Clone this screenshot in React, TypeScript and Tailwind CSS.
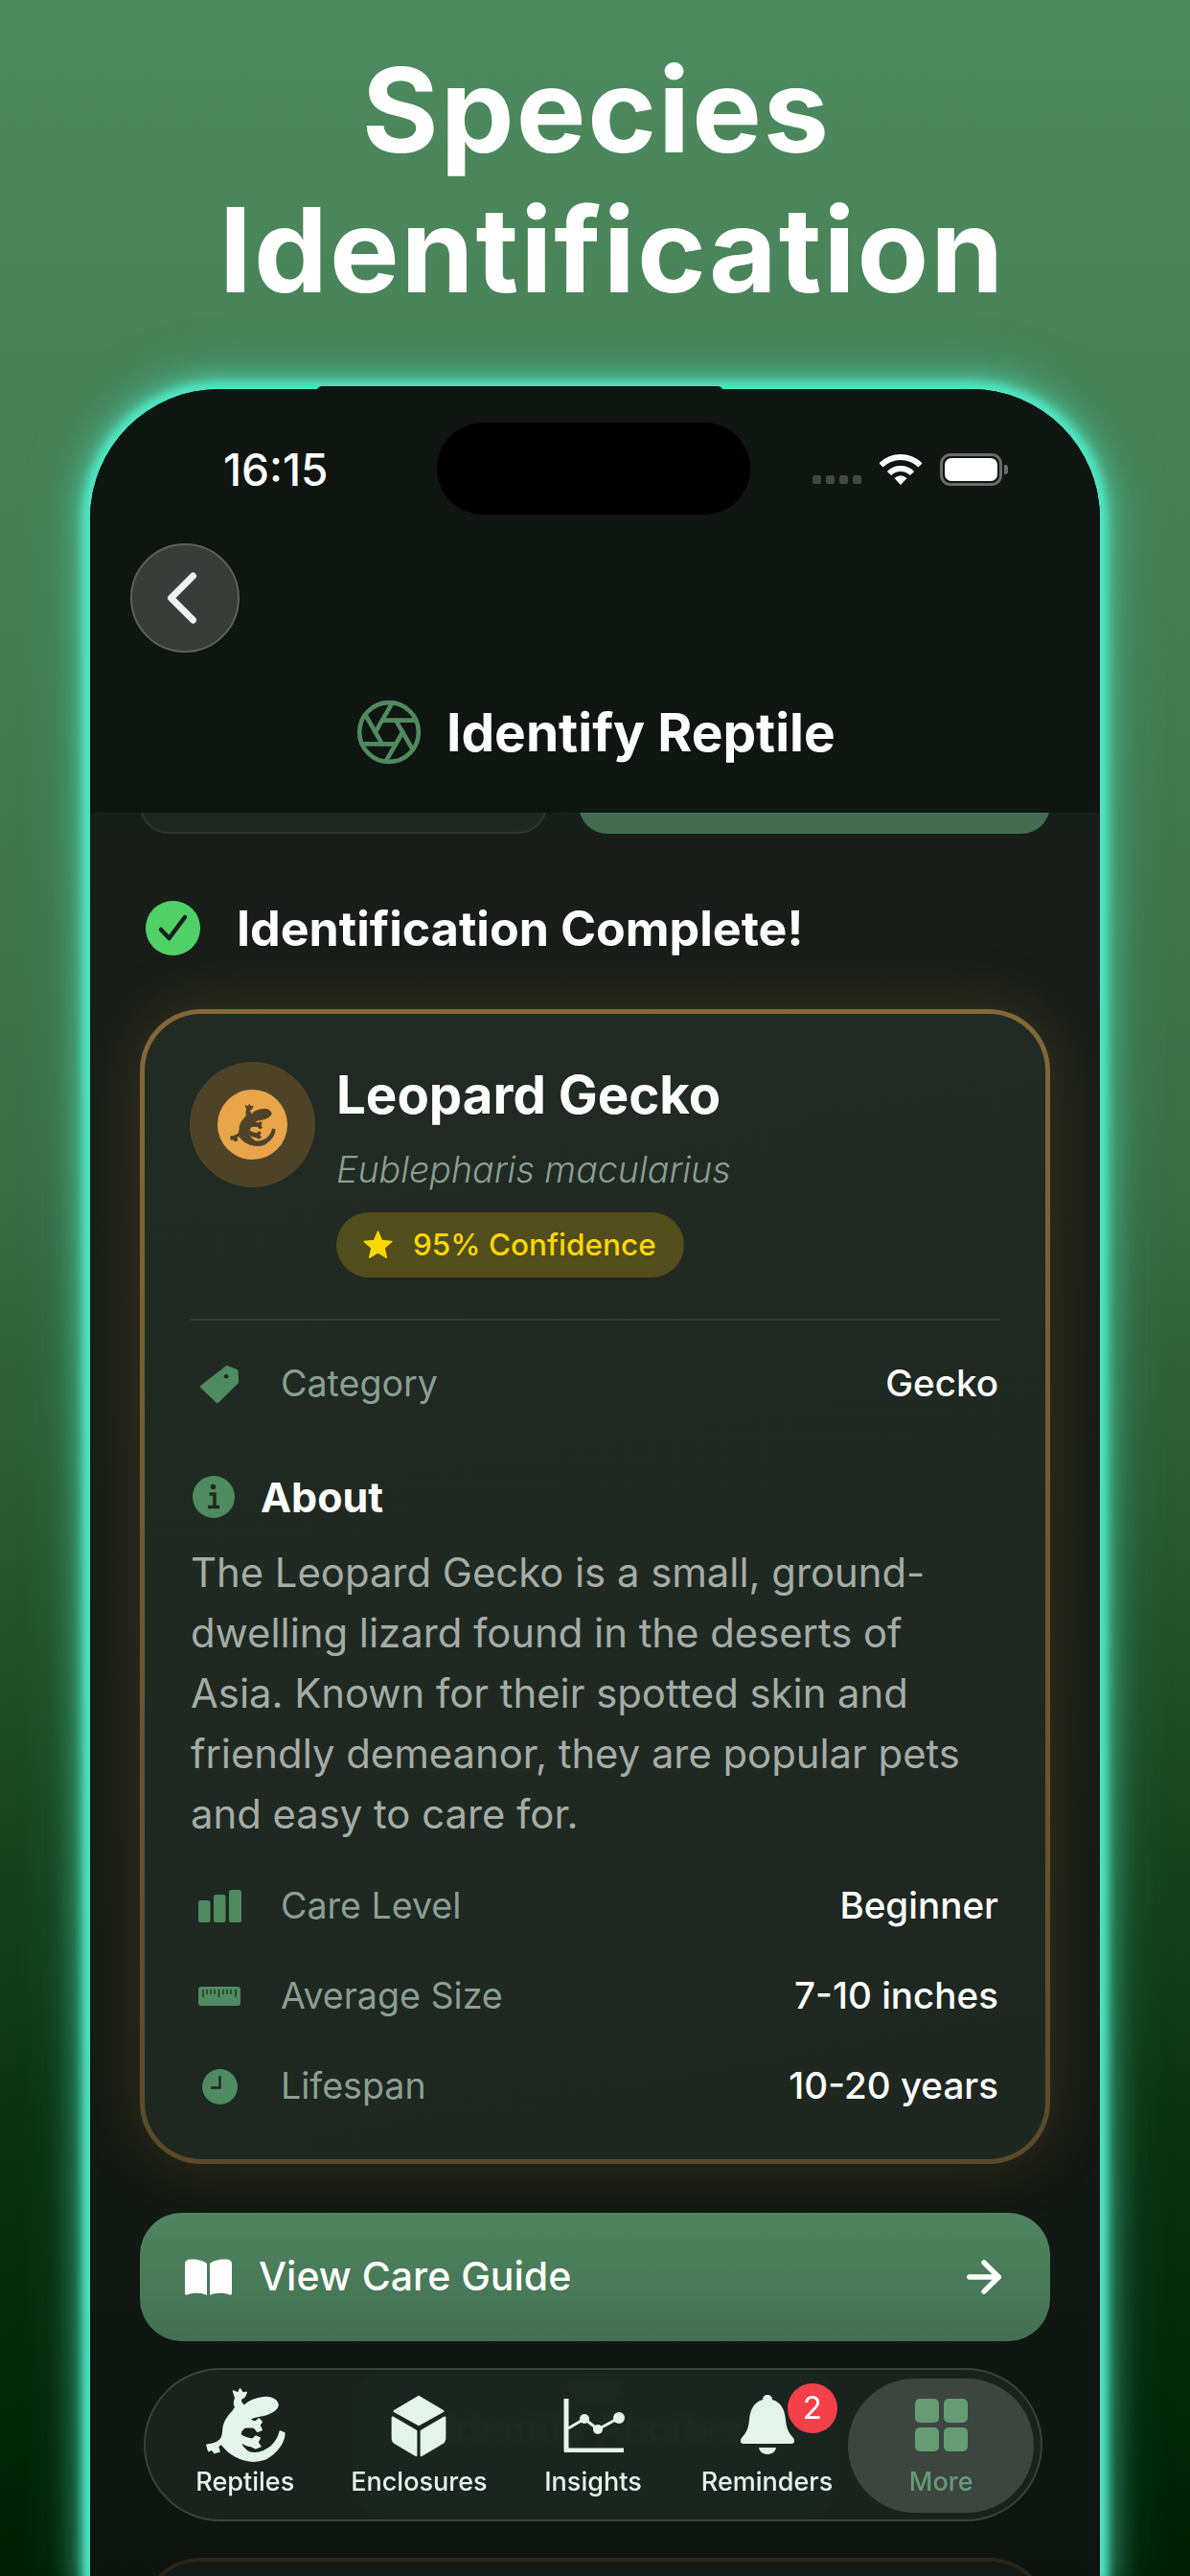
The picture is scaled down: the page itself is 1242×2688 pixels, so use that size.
import React from 'react';
import { Aperture, ArrowRight, ChevronLeft } from 'lucide-react';

const GeckoIcon = ({ className }: { className?: string }) => (
  <svg viewBox="30 20 265 250" className={className} fill="currentColor" stroke="currentColor" strokeWidth="5" strokeLinejoin="round">
    <path d="M160 85 C172 70 190 62 225 58 C245 57 262 66 265 82 C262 98 245 108 215 115 C200 118 188 118 177 126 C180 131 188 134 195 135 L205 126 L214 135 L207 145 L214 160 L201 165 L190 152 C178 152 168 150 160 152 C152 158 148 166 146 175 C155 182 172 188 185 190 L196 180 L208 186 L201 200 L210 212 L195 218 L181 211 C170 210 158 206 147 196 C148 208 160 224 178 232 C205 238 245 222 262 190 C268 180 270 172 272 165 L285 170 C286 195 265 230 225 252 C195 262 160 258 132 243 C115 235 98 218 87 204 L76 212 L81 228 L66 232 L58 222 L47 226 L42 208 L58 205 L72 200 C85 195 92 185 93 165 C92 145 100 125 125 100 L132 88 C125 80 128 70 132 60 L125 38 L140 45 L146 32 L155 45 L166 42 L160 56 L150 62 C146 68 146 75 160 85 Z" />
  </svg>
);

const CubeIcon = () => (
  <svg viewBox="-2 -2 64 71" className="w-[60px] h-[67px] mt-[2px]" fill="currentColor" stroke="currentColor" strokeWidth="2.5" strokeLinejoin="round">
    <path d="M30 1 L57 17 L30 32 L3 17 Z" />
    <path d="M1 24 L27 39 V66 L5 53 Q1 51 1 47 Z" />
    <path d="M59 24 L33 39 V66 L55 53 Q59 51 59 47 Z" />
  </svg>
);

const ChartIcon = () => (
  <svg viewBox="0 0 64 56" className="w-[64px] h-[56px] ml-[3px] mt-[2px]" fill="none" stroke="currentColor" strokeLinejoin="round">
    <path d="M3 0 V54 H63" strokeWidth="5" />
    <path d="M5 31 L22 21 L36 32 L58 20" strokeWidth="3" />
    <circle cx="22" cy="21" r="5" fill="currentColor" stroke="none" />
    <circle cx="36" cy="32" r="5" fill="currentColor" stroke="none" />
    <circle cx="58" cy="20" r="6" fill="currentColor" stroke="none" />
  </svg>
);

const BellIcon = () => (
  <svg viewBox="0 0 58 62" className="w-[58px] h-[62px]" fill="currentColor">
    <path d="M29 0 C26 0 24 2 24 5 C14 8 11 16 10 26 C9 36 7 39 2 45 C0 48 1 51 4 51 H54 C57 51 58 48 56 45 C51 39 49 36 48 26 C47 16 44 8 34 5 C34 2 32 0 29 0 Z" />
    <path d="M20 55 H38 C37 60 33 62 29 62 C25 62 21 60 20 55 Z" />
  </svg>
);

const GridIcon = () => (
  <svg viewBox="0 0 55 55" className="w-[55px] h-[55px]" fill="currentColor">
    <rect x="0" y="0" width="25" height="25" rx="5" />
    <rect x="30" y="0" width="25" height="25" rx="5" />
    <rect x="0" y="30" width="25" height="25" rx="5" />
    <rect x="30" y="30" width="25" height="25" rx="5" />
  </svg>
);

const WifiIcon = () => (
  <svg viewBox="0 0 44 32" className="w-[44px] h-[32px]" fill="none" stroke="white" strokeWidth="6">
    <path d="M1.5 11.5 A29 29 0 0 1 42.5 11.5" />
    <path d="M10 20 A17 17 0 0 1 34 20" />
    <path d="M22 32 L15.5 25 Q22 19.5 28.5 25 Z" fill="white" stroke="none" />
  </svg>
);

const TagIcon = () => (
  <svg viewBox="85 40 130 130" className="w-[43px] h-[43px]">
    <path d="M172 50 L203 62 L205 98 L142 160 L92 112 Z" fill="#4f8a60" stroke="#4f8a60" strokeWidth="9" strokeLinejoin="round" />
    <circle cx="170" cy="80" r="7" fill="#202922" />
  </svg>
);

const InfoIcon = () => (
  <svg viewBox="0 0 44 44" className="w-[44px] h-[44px]">
    <circle cx="22" cy="22" r="22" fill="#4f8a60" />
    <circle cx="21.5" cy="11.5" r="2.8" fill="#202922" />
    <path d="M17.5 19 H23 V32 M16 32.5 H28" fill="none" stroke="#202922" strokeWidth="3.4" />
  </svg>
);

const BarsIcon = () => (
  <svg viewBox="0 0 45 34" className="w-[45px] h-[34px]" fill="#4f8a60">
    <rect x="0" y="11" width="12.5" height="23" rx="2.5" />
    <rect x="16" y="5" width="12.5" height="29" rx="2.5" />
    <rect x="32" y="0" width="13" height="34" rx="2.5" />
  </svg>
);

const RulerIcon = () => (
  <svg viewBox="0 0 44 20" className="w-[44px] h-[20px]">
    <rect width="44" height="20" rx="3" fill="#4f8a60" />
    <path d="M5 3 V11 M9 3 V8 M13 3 V8 M17 3 V8 M21.500 3 V11 M26 3 V8 M30 3 V8 M34 3 V8 M39 3 V11" stroke="#202922" strokeWidth="1.3" />
  </svg>
);

const ClockIcon = () => (
  <svg viewBox="0 0 37 37" className="w-[37px] h-[37px]">
    <circle cx="18.5" cy="18.500" r="18.5" fill="#4f8a60" />
    <path d="M18.500 7 V19.500 H9" fill="none" stroke="#202922" strokeWidth="2.4" />
  </svg>
);

const BookIcon = () => (
  <svg viewBox="0 0 49 38" className="w-[49px] h-[38px]" fill="white">
    <path d="M23 5 C19 1.500 12 0 5 0.500 C2 0.800 0 2.500 0 5 V36 C0 37.500 1 38 2.500 37.500 C8.500 35 17 35 23 38 Z" />
    <path d="M26 5 C30 1.500 37 0 44 0.500 C47 0.800 49 2.500 49 5 V36 C49 37.500 48 38 46.500 37.500 C40.500 35 32 35 26 38 Z" />
  </svg>
);

const StarIcon = () => (
  <svg viewBox="0 0 24 24" className="w-[33px] h-[32px]" fill="#fcd800" stroke="#fcd800" strokeWidth="1" strokeLinejoin="round">
    <path d="M12 1.500 L15.100 8.600 L22.800 9.300 L17 14.400 L18.700 22 L12 18 L5.300 22 L7 14.400 L1.200 9.300 L8.900 8.600 Z" />
  </svg>
);

const DetailRow = ({ icon, label, value }: { icon: React.ReactNode; label: string; value: string }) => (
  <div className="flex items-center h-[60px]">
    <div className="w-[56px] flex justify-center ml-[3px]">{icon}</div>
    <span className="ml-[36px] text-[37.6px] text-[#8a9f92]">{label}</span>
    <span className="ml-auto mr-[2px] text-[38.600px] font-medium text-white">{value}</span>
  </div>
);

const tabs = [
  { label: 'Reptiles', icon: <GeckoIcon className="w-[88px] h-[83px]" /> },
  { label: 'Enclosures', icon: <CubeIcon /> },
  { label: 'Insights', icon: <ChartIcon /> },
  { label: 'Reminders', icon: <BellIcon />, badge: '2' },
  { label: 'More', icon: <GridIcon />, active: true },
];

export default function App() {
  return (
    <div
      className="w-[1242px] h-[2688px] overflow-hidden bg-[linear-gradient(180deg,#4e8a5f_0%,#437c53_25%,#3a6f48_45%,#1f5029_65%,#0a3312_82%,#012005_100%)]"
      style={{ fontFamily: 'Inter, "Liberation Sans", sans-serif' }}
    >
      {/* Headline */}
      <div className="h-[406px] pt-[42px] text-center text-white text-[122px] font-bold tracking-[2px] leading-[146px]">
        <div className="pl-[3px]">Species</div>
        <div className="pl-[36px]">Identification</div>
      </div>

      {/* Phone */}
      <div className="relative mx-[94px] h-[2282px] rounded-t-[135px] shadow-[0_0_10px_8px_#4fe8c4,0_0_28px_14px_rgba(79,232,196,0.55),0_0_60px_20px_rgba(79,232,196,0.18)]">
        <div className="absolute -top-[3px] left-[236px] w-[425px] h-[6px] rounded-t-[6px] bg-[#0f1511]" />
        <div className="relative h-full overflow-hidden rounded-t-[135px] bg-[linear-gradient(180deg,#181e1a_0%,#181d18_40%,#141a15_75%,#0e1410_100%)]">
          {/* Header */}
          <div className="relative z-10 bg-[#0f1511] pt-[35px] h-[442px]">
            <div className="relative flex items-center h-[96px]">
              <span className="ml-[139px] mt-[2px] text-[46px] font-medium text-white">16:15</span>
              <div className="absolute left-[362px] top-0 w-[327px] h-[96px] rounded-[48px] bg-black" />
              <div className="ml-auto mr-[96px] mt-[1px] flex items-center">
                <div className="flex gap-[5px] mt-[22px] mr-[19px]">
                  <div className="w-[9px] h-[9px] rounded-[2px] bg-[#444845]" />
                  <div className="w-[9px] h-[9px] rounded-[2px] bg-[#444845]" />
                  <div className="w-[9px] h-[9px] rounded-[2px] bg-[#444845]" />
                  <div className="w-[9px] h-[9px] rounded-[2px] bg-[#444845]" />
                </div>
                <WifiIcon />
                <div className="ml-[19px] w-[65px] h-[34px] rounded-[11px] border-[3px] border-[#6b6d6b] p-[2px]">
                  <div className="w-full h-full rounded-[7px] bg-white" />
                </div>
                <div className="ml-[2px] w-[4px] h-[10px] rounded-r-[3px] bg-[#6b6d6b]" />
              </div>
            </div>
            <div className="ml-[42px] mt-[30px] w-[114px] h-[114px] rounded-full bg-[#383d39] border-2 border-[#5b625c] flex items-center justify-center">
              <ChevronLeft className="w-[92px] h-[92px] shrink-0 text-[#eef5f0] -ml-[6px]" strokeWidth={1.8} />
            </div>
            <div className="mt-[50px] flex items-center h-[66px] pl-[275px]">
              <Aperture className="w-[74px] h-[74px] shrink-0 text-[#4f8a60]" strokeWidth={1.5} />
              <span className="ml-[23px] text-[55px] font-bold text-white">Identify Reptile</span>
            </div>
          </div>

          {/* Scrolling content */}
          <div className="px-[52px]">
            <div className="flex gap-[33px] h-[60px] -mt-[38px]">
              <div className="w-[425px] rounded-[30px] bg-[#1f2820] border-2 border-[#2d362f]" />
              <div className="flex-1 rounded-[30px] bg-[#436d4e]" />
            </div>

            <div className="mt-[70px] flex items-center h-[57px] ml-[6px]">
              <svg viewBox="0 0 57 57" className="w-[57px] h-[57px]">
                <circle cx="28.500" cy="28.500" r="28.500" fill="#4fd167" />
                <path d="M16 30 L24.500 39 L41 17" fill="none" stroke="#16201a" strokeWidth="4.500" strokeLinecap="round" strokeLinejoin="round" />
              </svg>
              <span className="ml-[38px] text-[50.200px] font-bold text-white">Identification Complete!</span>
            </div>

            {/* Result card */}
            <div className="mt-[56px] rounded-[64px] border-[5px] border-transparent px-[47px] pt-[50px] pb-[46px] shadow-[0_0_70px_rgba(233,165,74,0.17)] [background:linear-gradient(170deg,#212a23,#1f2922_50%,#1e2620)_padding-box,linear-gradient(180deg,#826739,#5a4a2a)_border-box]">
              <div className="flex">
                <div className="w-[131px] h-[131px] rounded-full bg-[#4e4328] flex items-center justify-center shrink-0">
                  <div className="w-[73px] h-[73px] rounded-full bg-[#e9a54a] flex items-center justify-center text-[#4e4328]">
                    <GeckoIcon className="w-[51px] h-[48px]" />
                  </div>
                </div>
                <div className="ml-[22px]">
                  <div className="h-[68px] leading-[68px] text-[54.600px] font-bold text-white">Leopard Gecko</div>
                  <div className="mt-[15px] h-[60px] leading-[60px] text-[37.6px] italic font-light text-[#8a9f92]">Eublepharis macularius</div>
                  <div className="mt-[14px] w-[363px] h-[68px] rounded-[34px] bg-[#524d1c] flex items-center pl-[27px]">
                    <StarIcon />
                    <span className="ml-[20px] text-[31.500px] font-medium text-[#fcd800]">95% Confidence</span>
                  </div>
                </div>
              </div>

              <div className="mt-[43px] h-[2px] bg-[#323b34]" />

              <div className="mt-[36px]">
                <DetailRow icon={<TagIcon />} label="Category" value="Gecko" />
              </div>

              <div className="mt-[60px] h-[56px] flex items-center">
                <div className="ml-[3px]"><InfoIcon /></div>
                <span className="ml-[27px] text-[43px] font-bold text-white">About</span>
              </div>

              <p className="mt-[20px] pl-[1px] text-[41.800px] leading-[63px] text-[#a5aca6]">
                The Leopard Gecko is a small, ground-dwelling lizard found in the deserts of Asia. Known for their spotted skin and friendly demeanor, they are popular pets and easy to care for.
              </p>

              <div className="mt-[34px] flex flex-col gap-[34px]">
                <DetailRow icon={<BarsIcon />} label="Care Level" value="Beginner" />
                <DetailRow icon={<RulerIcon />} label="Average Size" value="7-10 inches" />
                <DetailRow icon={<ClockIcon />} label="Lifespan" value="10-20 years" />
              </div>
            </div>

            {/* Care guide */}
            <div className="mt-[51px] h-[134px] rounded-[44px] bg-[linear-gradient(180deg,#4f8560,#437052)] flex items-center pl-[47px] pr-[43px]">
              <BookIcon />
              <span className="ml-[28px] text-[41px] font-medium text-white">View Care Guide</span>
              <ArrowRight className="ml-auto w-[52px] h-[52px] text-white" strokeWidth={2.5} />
            </div>

            {/* Identify another sits behind the tab bar */}
            <div className="mt-[32px] mx-[224px] h-[150px] flex flex-col items-center pt-[6px] rounded-[30px] bg-[#1d2d22]">
              <div className="w-[50px] h-[24px] rounded-full bg-[#24482f]" />
              <span className="mt-[6px] leading-[46px] whitespace-nowrap text-[40px] font-semibold text-[#24482f]">Identify Another</span>
            </div>

            <div className="mt-[44px] h-[120px] rounded-t-[64px] border-4 border-[#2a2618] bg-[#141a15]" />
          </div>

          {/* Tab bar */}
          <div className="absolute left-[56px] top-[2065px] w-[938px] h-[160px] rounded-[80px] border-2 border-[#37443a] bg-[#1b241e]/85 backdrop-blur-[2px] flex px-[13px]">
            {tabs.map((tab) => (
              <div
                key={tab.label}
                className={`relative flex-1 flex flex-col items-center pt-[17px] ${tab.active ? 'text-[#669b74]' : 'text-[#e3f5ea]'}`}
              >
                {tab.active && <div className="absolute -left-[6px] -right-[6px] top-[9px] bottom-[7px] rounded-[70px] bg-[#3c4540]" />}
                <div className="relative h-[80px] flex items-center justify-center">{tab.icon}</div>
                <span className="relative mt-[2px] text-[27px] font-medium leading-[36px]">{tab.label}</span>
                {tab.badge && (
                  <div className="absolute left-[112px] top-[14px] w-[52px] h-[52px] rounded-full bg-[#f5404a] flex items-center justify-center text-[33px] text-white">
                    {tab.badge}
                  </div>
                )}
              </div>
            ))}
          </div>
        </div>
      </div>
    </div>
  );
}
